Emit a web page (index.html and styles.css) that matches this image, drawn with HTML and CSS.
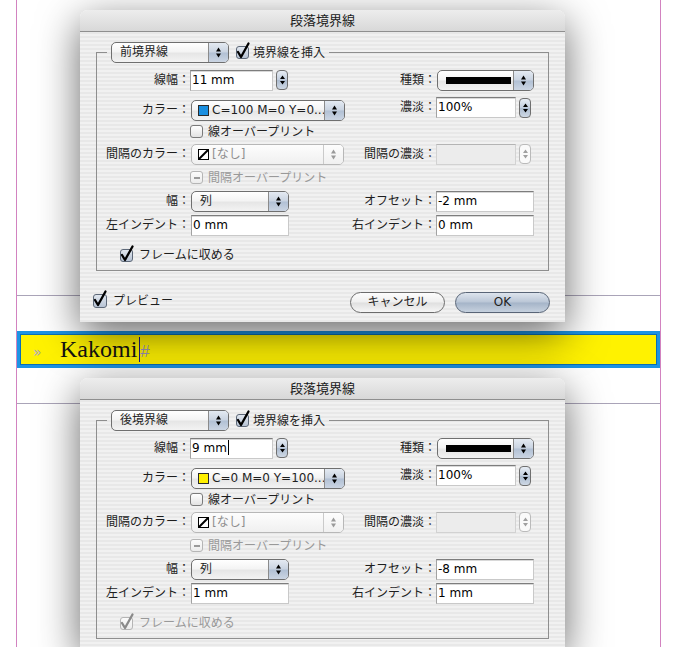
FILE: index.html
```html
<!DOCTYPE html>
<html lang="ja">
<head>
<meta charset="utf-8">
<title>段落境界線</title>
<link rel="stylesheet" href="styles.css">
</head>
<body>
<div class="desk">
  <div class="page">
    <div class="rule"></div>
    <div class="kakomi"><span class="raquo">»</span><span class="word">Kakomi</span><span class="ibeam"></span><span class="hash">#</span></div>
    <div class="rule rule-2"></div>
  </div>

  <section class="dialog dlg-top">
    <header class="titlebar">段落境界線</header>
    <div class="dlg-body">
      <fieldset class="group">
        <legend class="legend"><div class="legend-inner">
          <div class="popup pop-which"><span class="pop-text">前境界線</span><span class="pop-arrows"><svg width="9" height="13" viewBox="0 0 9 13"><path d="M2 5.5h5L4.5 1.5z M2 7.5h5l-2.5 4z"/></svg></span></div>
          <span class="cb on"><svg class="tick" width="14" height="17" viewBox="0 -4 14 17"><path d="M2 6 L5 11 L12.5 -2.5" fill="none" stroke="#000" stroke-width="2.3" stroke-linecap="round" stroke-linejoin="round"/></svg></span>
          <span class="legend-label">境界線を挿入</span>
        </div></legend>
        <div class="grid">
          <span class="lbl">線幅：</span>
          <div class="num"><div class="field w83">11 mm</div><span class="spin"><svg width="7" height="12" viewBox="0 0 7 12"><path d="M1 5h5L3.5 1.5z M1 7h5l-2.5 3.5z"/></svg></span></div>
          <span class="lbl">種類：</span>
          <div class="popup w97"><span class="pop-text"><span class="line-sample"></span></span><span class="pop-arrows"><svg width="9" height="13" viewBox="0 0 9 13"><path d="M2 5.5h5L4.5 1.5z M2 7.5h5l-2.5 4z"/></svg></span></div>

          <span class="lbl at-end">カラー：</span>
          <div class="popup w154 at-end"><span class="pop-text"><span class="sw sw-cyan"></span>C=100 M=0 Y=0...</span><span class="pop-arrows"><svg width="9" height="13" viewBox="0 0 9 13"><path d="M2 5.5h5L4.5 1.5z M2 7.5h5l-2.5 4z"/></svg></span></div>
          <span class="lbl at-top">濃淡：</span>
          <div class="num at-top"><div class="field w80">100%</div><span class="spin"><svg width="7" height="12" viewBox="0 0 7 12"><path d="M1 5h5L3.5 1.5z M1 7h5l-2.5 3.5z"/></svg></span></div>

          <div class="chk span-right"><span class="cb"></span><span>線オーバープリント</span></div>

          <span class="lbl">間隔のカラー：</span>
          <div class="popup w153 dis"><span class="pop-text"><svg class="none-sw" width="11" height="11" viewBox="0 0 11 11"><rect x=".5" y=".5" width="10" height="10" fill="#fff" stroke="#000"/><path d="M1 10L10 1" stroke="#000" stroke-width="2"/></svg>[なし]</span><span class="pop-arrows"><svg width="9" height="13" viewBox="0 0 9 13"><path d="M2 5.5h5L4.5 1.5z M2 7.5h5l-2.5 4z"/></svg></span></div>
          <span class="lbl">間隔の濃淡：</span>
          <div class="num"><div class="field w80 dis"></div><span class="spin dis"><svg width="7" height="12" viewBox="0 0 7 12"><path d="M1 5h5L3.5 1.5z M1 7h5l-2.5 3.5z"/></svg></span></div>

          <div class="chk span-right dis"><span class="cb dis mixed"><span class="dash"></span></span><span>間隔オーバープリント</span></div>

          <span class="lbl">幅：</span>
          <div class="popup w98"><span class="pop-text">列</span><span class="pop-arrows"><svg width="9" height="13" viewBox="0 0 9 13"><path d="M2 5.5h5L4.5 1.5z M2 7.5h5l-2.5 4z"/></svg></span></div>
          <span class="lbl">オフセット：</span>
          <div class="field w98">-2 mm</div>

          <span class="lbl">左インデント：</span>
          <div class="field w98 ml1">0 mm</div>
          <span class="lbl">右インデント：</span>
          <div class="field w98">0 mm</div>
        </div>
        <div class="chk fit"><span class="cb on"><svg class="tick" width="14" height="17" viewBox="0 -4 14 17"><path d="M2 6 L5 11 L12.5 -2.5" fill="none" stroke="#000" stroke-width="2.3" stroke-linecap="round" stroke-linejoin="round"/></svg></span><span>フレームに収める</span></div>
      </fieldset>
      <div class="footer">
        <div class="chk preview"><span class="cb on"><svg class="tick" width="14" height="17" viewBox="0 -4 14 17"><path d="M2 6 L5 11 L12.5 -2.5" fill="none" stroke="#000" stroke-width="2.3" stroke-linecap="round" stroke-linejoin="round"/></svg></span><span>プレビュー</span></div>
        <div class="buttons"><span class="btn">キャンセル</span><span class="btn ok">OK</span></div>
      </div>
    </div>
  </section>

  <section class="dialog dlg-bottom">
    <header class="titlebar">段落境界線</header>
    <div class="dlg-body">
      <fieldset class="group">
        <legend class="legend"><div class="legend-inner">
          <div class="popup pop-which"><span class="pop-text">後境界線</span><span class="pop-arrows"><svg width="9" height="13" viewBox="0 0 9 13"><path d="M2 5.5h5L4.5 1.5z M2 7.5h5l-2.5 4z"/></svg></span></div>
          <span class="cb on"><svg class="tick" width="14" height="17" viewBox="0 -4 14 17"><path d="M2 6 L5 11 L12.5 -2.5" fill="none" stroke="#000" stroke-width="2.3" stroke-linecap="round" stroke-linejoin="round"/></svg></span>
          <span class="legend-label">境界線を挿入</span>
        </div></legend>
        <div class="grid">
          <span class="lbl">線幅：</span>
          <div class="num"><div class="field w83">9 mm<span class="caret"></span></div><span class="spin"><svg width="7" height="12" viewBox="0 0 7 12"><path d="M1 5h5L3.5 1.5z M1 7h5l-2.5 3.5z"/></svg></span></div>
          <span class="lbl">種類：</span>
          <div class="popup w97"><span class="pop-text"><span class="line-sample"></span></span><span class="pop-arrows"><svg width="9" height="13" viewBox="0 0 9 13"><path d="M2 5.5h5L4.5 1.5z M2 7.5h5l-2.5 4z"/></svg></span></div>

          <span class="lbl at-end">カラー：</span>
          <div class="popup w154 at-end"><span class="pop-text"><span class="sw sw-yellow"></span>C=0 M=0 Y=100...</span><span class="pop-arrows"><svg width="9" height="13" viewBox="0 0 9 13"><path d="M2 5.5h5L4.5 1.5z M2 7.5h5l-2.5 4z"/></svg></span></div>
          <span class="lbl at-top">濃淡：</span>
          <div class="num at-top"><div class="field w80">100%</div><span class="spin"><svg width="7" height="12" viewBox="0 0 7 12"><path d="M1 5h5L3.5 1.5z M1 7h5l-2.5 3.5z"/></svg></span></div>

          <div class="chk span-right"><span class="cb"></span><span>線オーバープリント</span></div>

          <span class="lbl">間隔のカラー：</span>
          <div class="popup w153 dis"><span class="pop-text"><svg class="none-sw" width="11" height="11" viewBox="0 0 11 11"><rect x=".5" y=".5" width="10" height="10" fill="#fff" stroke="#000"/><path d="M1 10L10 1" stroke="#000" stroke-width="2"/></svg>[なし]</span><span class="pop-arrows"><svg width="9" height="13" viewBox="0 0 9 13"><path d="M2 5.5h5L4.5 1.5z M2 7.5h5l-2.5 4z"/></svg></span></div>
          <span class="lbl">間隔の濃淡：</span>
          <div class="num"><div class="field w80 dis"></div><span class="spin dis"><svg width="7" height="12" viewBox="0 0 7 12"><path d="M1 5h5L3.5 1.5z M1 7h5l-2.5 3.5z"/></svg></span></div>

          <div class="chk span-right dis"><span class="cb dis mixed"><span class="dash"></span></span><span>間隔オーバープリント</span></div>

          <span class="lbl">幅：</span>
          <div class="popup w98"><span class="pop-text">列</span><span class="pop-arrows"><svg width="9" height="13" viewBox="0 0 9 13"><path d="M2 5.5h5L4.5 1.5z M2 7.5h5l-2.5 4z"/></svg></span></div>
          <span class="lbl">オフセット：</span>
          <div class="field w98">-8 mm</div>

          <span class="lbl">左インデント：</span>
          <div class="field w98 ml1">1 mm</div>
          <span class="lbl">右インデント：</span>
          <div class="field w98">1 mm</div>
        </div>
        <div class="chk fit dis"><span class="cb on dis"><svg class="tick" width="14" height="17" viewBox="0 -4 14 17"><path d="M2 6 L5 11 L12.5 -2.5" fill="none" stroke="#8a8a8a" stroke-width="2.3" stroke-linecap="round" stroke-linejoin="round"/></svg></span><span>フレームに収める</span></div>
      </fieldset>
    </div>
  </section>
</div>
</body>
</html>
```

FILE: styles.css
```css
html, body {
  margin: 0;
  padding: 0;
  overflow: hidden;
  background: #fff;
}
body {
  font-family: "DejaVu Sans", "Noto Sans CJK JP", sans-serif;
  font-size: 12px;
  color: #1e1e1e;
}
.desk {
  position: relative;
  width: 674px;
  height: 647px;
  overflow: hidden;
}

/* document page */
.page {
  box-sizing: border-box;
  margin-left: 16px;
  width: 645px;
  height: 647px;
  border-left: 1px solid #d283c0;
  border-right: 1px solid #d283c0;
  padding-top: 295px;
}
.rule {
  height: 1px;
  background: #aaa4b8;
}
.rule-2 {
  margin-top: 35px;
}
.kakomi {
  box-sizing: border-box;
  height: 37px;
  margin-top: 35px;
  border: 3px solid #1d93e4;
  box-shadow: inset 0 0 0 1px #0b6fb5;
  background: #fff200;
  display: flex;
  align-items: baseline;
  padding-left: 13px;
  line-height: 31px;
}
.raquo {
  width: 27px;
  font-family: "DejaVu Sans", sans-serif;
  font-size: 14px;
  color: #a9a2cc;
}
.word {
  font-family: "Liberation Serif", serif;
  font-size: 24px;
  color: #141414;
}
.ibeam {
  align-self: center;
  width: 1px;
  height: 25px;
  background: #1a1a80;
  margin-left: 2px;
}
.hash {
  font-family: "Liberation Sans", sans-serif;
  font-size: 17px;
  color: #9a92b6;
}

/* dialogs (floating windows) */
.dialog {
  position: absolute;
  left: 80px;
  width: 485px;
  height: 312px;
  border-radius: 8px 8px 0 0;
  background: repeating-linear-gradient(to bottom, #f1f1f1 0, #f1f1f1 2px, #e8e8e8 2px, #e8e8e8 4px);
  box-shadow: 0 12px 42px rgba(0, 0, 0, 0.6);
  overflow: hidden;
  z-index: 1;
}
.dlg-top { top: 10px; }
.dlg-bottom { top: 378px; height: 269px; }

.titlebar {
  display: block;
  height: 21px;
  border-bottom: 1px solid #8f8f8f;
  background: linear-gradient(#ededed, #d8d8d8);
  text-align: center;
  font-size: 13px;
  line-height: 22px;
  color: #1a1a1a;
}
.dlg-body {
  padding-top: 10px;
}
.group {
  margin: 0 16px;
  padding: 0 0 5px;
  border: 1px solid #8e8e8e;
  min-width: 0;
}
.legend {
  padding: 0 4px;
  margin-left: 10px;
}
.legend-inner {
  display: flex;
  align-items: center;
  height: 21px;
}
.pop-which {
  width: 118px;
  margin-right: 7px;
}
.legend-label {
  margin-left: 4px;
  line-height: 16px;
}

.grid {
  display: grid;
  grid-template-columns: 93px 155px 91px 98px;
  grid-template-rows: 24px 29px 21px 24px 23px 24px 24px;
  align-items: center;
  padding-top: 5px;
}
.lbl {
  text-align: right;
  line-height: 21px;
  height: 21px;
  white-space: nowrap;
}
.at-end { align-self: end; }
.at-top { align-self: start; margin-top: 5px; }
.span-right { grid-column: 2 / 5; }

/* popup menus */
.popup {
  box-sizing: border-box;
  height: 21px;
  display: flex;
  align-items: center;
  border: 1px solid #6f6f6f;
  border-radius: 5px;
  background: linear-gradient(#ffffff, #f4f4f4 45%, #e6e6e6 55%, #f3f3f3);
  overflow: hidden;
  margin-left: 1px;
}
.pop-which { margin-left: 0; }
.w97 { width: 97px; }
.w98 { width: 98px; }
.w153 { width: 153px; }
.w154 { width: 154px; }
.pop-text {
  flex: 1;
  min-width: 0;
  padding-left: 8px;
  white-space: nowrap;
  line-height: 19px;
  display: flex;
  align-items: center;
  gap: 3px;
}
.pop-arrows {
  flex: none;
  width: 19px;
  height: 100%;
  border-left: 1px solid #8b8b8b;
  background: linear-gradient(#e4eaf2, #c9d3e1 48%, #b1c0d4 52%, #cbd5e3);
  display: flex;
  align-items: center;
  justify-content: center;
}
.pop-arrows svg,
.spin svg { fill: #000; }
.popup.dis {
  border-color: #b7b7b7;
  background: linear-gradient(#fdfdfd, #f0f0f0);
  color: #8e8e8e;
}
.popup.dis .pop-arrows {
  background: linear-gradient(#fdfdfd, #f0f0f0);
  border-left-color: #cacaca;
}
.popup.dis .pop-arrows svg { fill: #9a9a9a; }
.line-sample {
  width: 65px;
  height: 7px;
  background: #000;
}
.sw {
  box-sizing: border-box;
  width: 11px;
  height: 11px;
  border: 1px solid #2a2a2a;
  flex: none;
  margin-left: -2px;
}
.sw-cyan { background: #1a8fe0; }
.sw-yellow { background: #fff000; }
.none-sw { flex: none; margin-left: -2px; }

/* text fields */
.num {
  display: flex;
  align-items: center;
  gap: 3px;
}
.field {
  box-sizing: border-box;
  height: 21px;
  background: #fff;
  border: 1px solid #c9c9c9;
  border-top-color: #7d7d7d;
  border-left-color: #a2a2a2;
  box-shadow: inset 0 1px 0 #d8d8d8;
  padding: 1px 0 0 1px;
  line-height: 16px;
  white-space: nowrap;
  color: #000;
}
.w83 { width: 83px; }
.w80 { width: 80px; }
.ml1 { margin-left: 1px; }
.field.dis {
  background: #ececec;
  border-color: #d2d2d2;
  border-top-color: #b4b4b4;
  box-shadow: none;
}
.caret {
  display: inline-block;
  width: 1px;
  height: 15px;
  background: #000;
  vertical-align: -3px;
  margin-left: 1px;
}
.spin {
  box-sizing: border-box;
  width: 12px;
  height: 20px;
  border: 1px solid #6f6f6f;
  border-radius: 4px;
  background: linear-gradient(#e7edf4, #c3cede 48%, #adbccf 52%, #ced8e5);
  display: flex;
  align-items: center;
  justify-content: center;
  flex: none;
}
.spin.dis {
  background: #fafafa;
  border-color: #bababa;
}
.spin.dis svg { fill: #a0a0a0; }

/* checkboxes */
.chk {
  display: flex;
  align-items: center;
  gap: 5px;
  line-height: 16px;
  white-space: nowrap;
}
.chk.dis { color: #999; }
.cb {
  position: relative;
  box-sizing: border-box;
  width: 13px;
  height: 13px;
  border: 1px solid #7a7a7a;
  border-radius: 3px;
  background: linear-gradient(#ffffff, #e2e2e2);
  flex: none;
}
.cb.on {
  background: linear-gradient(#e1e7ef, #b7c3d4);
  border-color: #5d6878;
}
.cb.dis {
  border-color: #b5b5b5;
  background: linear-gradient(#fbfbfb, #ececec);
}
.tick {
  position: absolute;
  left: -1px;
  top: -5px;
  overflow: visible;
}
.mixed {
  display: flex;
  align-items: center;
  justify-content: center;
}
.dash {
  width: 6px;
  height: 2px;
  background: #9a9a9a;
}
.fit {
  margin: 8px 0 0 23px;
  height: 20px;
  gap: 6px;
}

/* footer */
.footer {
  display: flex;
  align-items: flex-start;
  margin-top: 21px;
  padding: 0 15px 0 13px;
}
.preview {
  margin-top: 1px;
  gap: 6px;
}
.preview .cb { width: 14px; height: 14px; }
.buttons {
  margin-left: auto;
  display: flex;
  gap: 10px;
}
.btn {
  box-sizing: border-box;
  width: 95px;
  height: 21px;
  border: 1px solid #6c6c6c;
  border-radius: 11px;
  background: linear-gradient(#fdfdfd, #efefef 48%, #dfdfdf 52%, #f6f6f6);
  text-align: center;
  line-height: 19px;
  font-size: 12px;
}
.btn.ok {
  background: linear-gradient(#dde4ed, #bac6d6 48%, #a5b4c8 52%, #c6d1de);
  border-color: #596577;
}
```
